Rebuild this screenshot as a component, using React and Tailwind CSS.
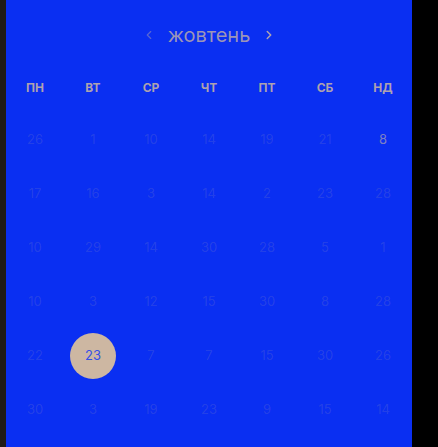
import { ChevronLeft, ChevronRight } from "lucide-react";

const days = ["пн", "вт", "ср", "чт", "пт", "сб", "нд"];

const weeks = [
  [26, 1, 10, 14, 19, 21, 8],
  [17, 16, 3, 14, 2, 23, 28],
  [10, 29, 14, 30, 28, 5, 1],
  [10, 3, 12, 15, 30, 8, 28],
  [22, 23, 7, 7, 15, 30, 26],
  [30, 3, 19, 23, 9, 15, 14],
];

function Day({ value, row, col }) {
  const selected = row === 4 && col === 1;
  const bright = row === 0 && col === 6;

  if (selected) {
    return (
      <div className="flex h-[54px] items-center justify-center">
        <div className="flex h-[46px] w-[46px] items-center justify-center rounded-full bg-[#cdb7a2] text-[13px] text-[#3450e6]">
          {value}
        </div>
      </div>
    );
  }

  return (
    <div
      className={
        "flex h-[54px] items-center justify-center text-[13px] " +
        (bright ? "text-[#cdb8a2]/60" : "text-[#cdb8a2]/15")
      }
    >
      {value}
    </div>
  );
}

export default function App() {
  return (
    <div className="flex h-[447px] w-[438px] bg-black font-['Inter',sans-serif]">
      <div className="w-[6px] bg-[#1f1b16]" />
      <div className="flex w-[406px] flex-col bg-[#0a2ff2]">
        <div className="flex h-[70px] items-center justify-center gap-3">
          <ChevronLeft size={14} strokeWidth={2} className="text-[#cdb8a2]/40" />
          <span className="text-[20px] text-[#cdb8a2]/75">жовтень</span>
          <ChevronRight size={14} strokeWidth={2.5} className="text-[#cdb8a2]/85" />
        </div>
        <div className="grid h-[36px] grid-cols-7 items-center">
          {days.map((d) => (
            <div key={d} className="text-center text-[12px] font-bold uppercase text-[#cdb8a2]/85">
              {d}
            </div>
          ))}
        </div>
        <div className="mt-[7px] grid grid-cols-7">
          {weeks.map((week, r) =>
            week.map((v, c) => <Day key={r + "-" + c} value={v} row={r} col={c} />)
          )}
        </div>
      </div>
    </div>
  );
}
